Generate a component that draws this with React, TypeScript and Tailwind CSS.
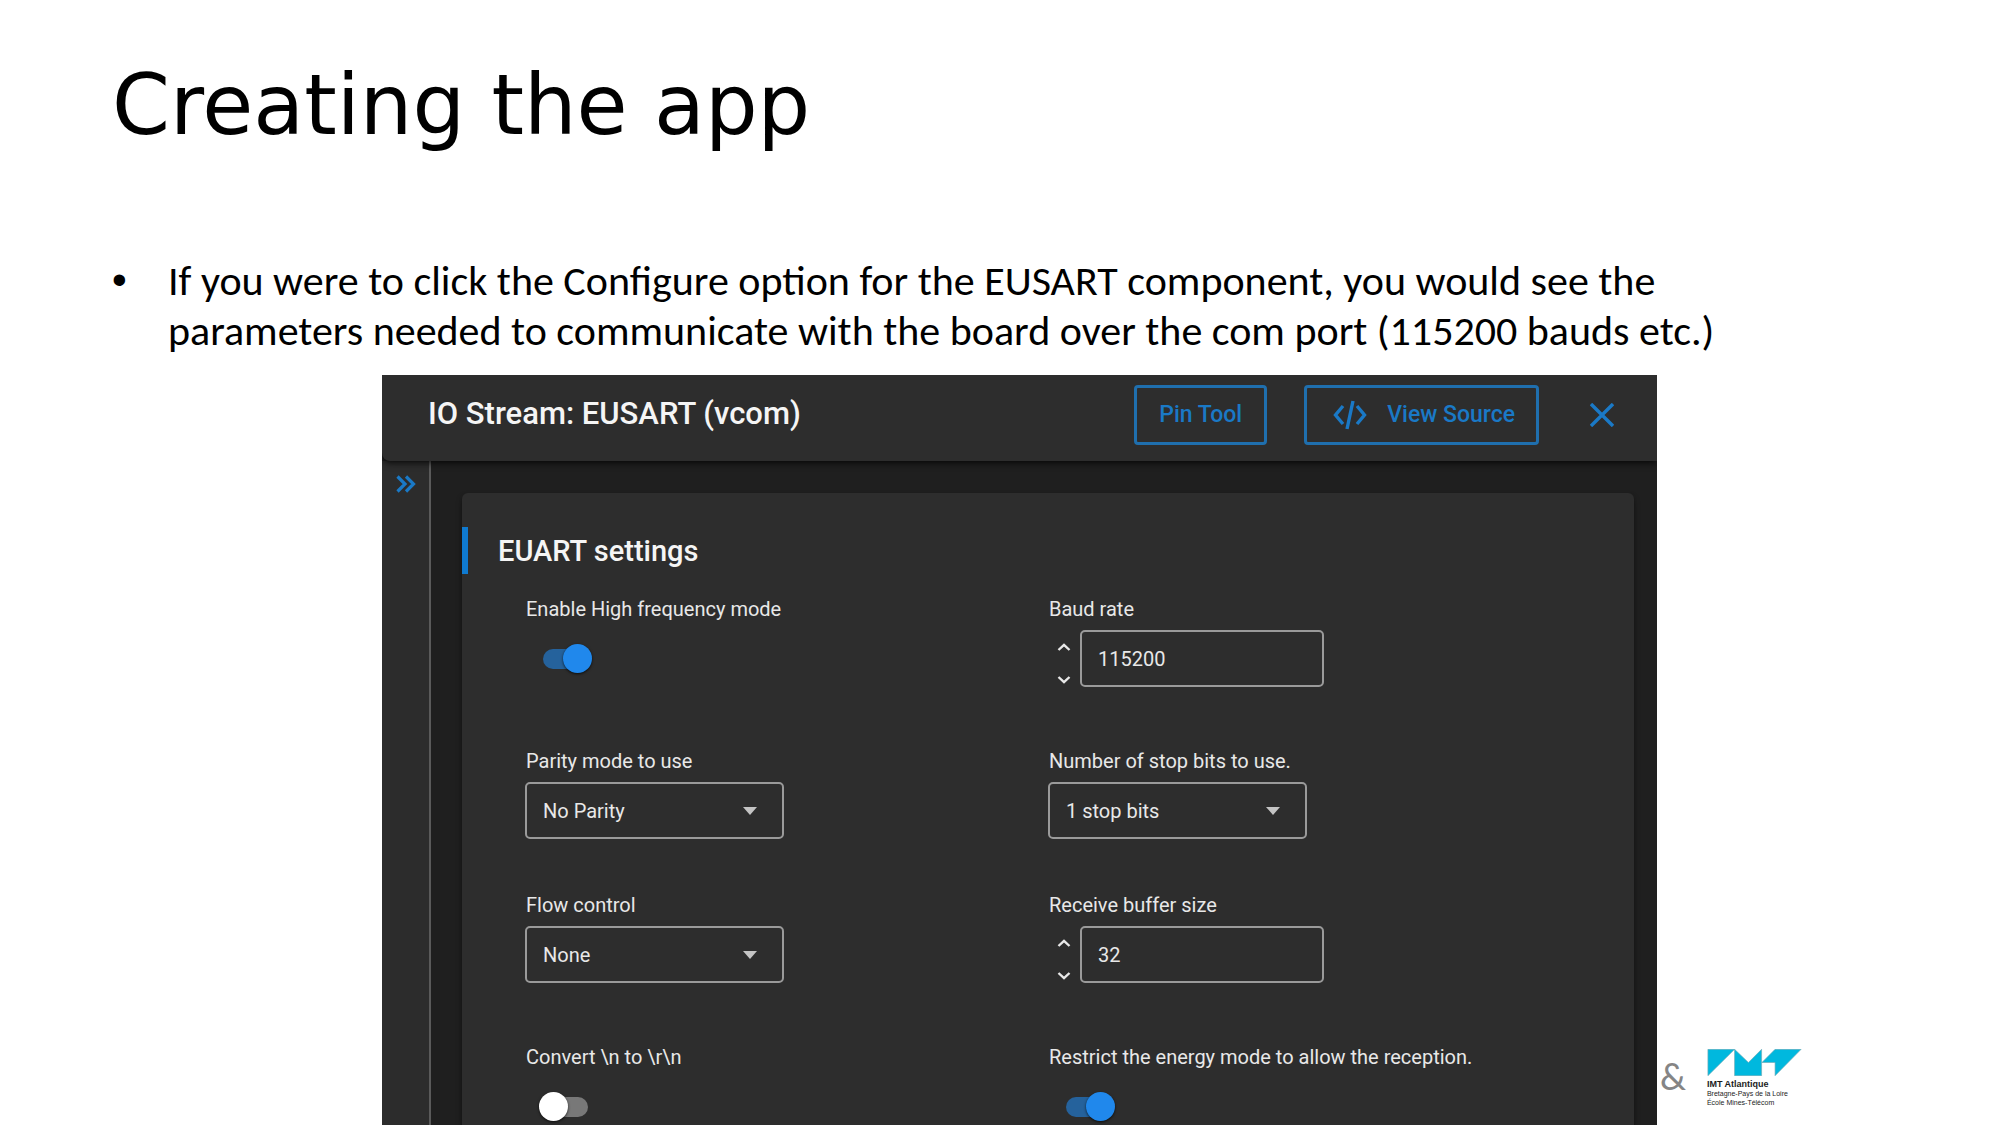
import { useId, useState, type ReactNode } from "react";

function CodeIcon() {
  return (
    <svg viewBox="0 0 34 30" className="h-[30px] w-[34px]" fill="none" stroke="currentColor" strokeWidth="3.400" aria-hidden="true">
      <path d="M10 6 L2.5 15 L10 24 M24 6 L31.500 15 L24 24 M20 1 L14 29" />
    </svg>
  );
}

function CloseIcon() {
  return (
    <svg viewBox="0 0 24 24" className="size-6" fill="none" stroke="currentColor" strokeWidth="3.400" aria-hidden="true">
      <path d="M1 1 L23 23 M23 1 L1 23" />
    </svg>
  );
}

function DoubleChevronIcon() {
  return (
    <svg viewBox="0 0 20 18" className="h-[18px] w-5" fill="none" stroke="currentColor" strokeWidth="3.200" aria-hidden="true">
      <path d="M1.500 1.500 L9 9 L1.500 16.500 M10 1.500 L17.500 9 L10 16.500" />
    </svg>
  );
}

function StepIcon({ up = false }: { up?: boolean }) {
  return (
    <svg viewBox="0 0 14 8" className="h-2 w-3.5" fill="none" stroke="currentColor" strokeWidth="2.400" aria-hidden="true">
      <path d={up ? "M1.500 7 L7 1.800 L12.500 7" : "M1.500 1 L7 6.200 L12.500 1"} />
    </svg>
  );
}

function Field({ label, id, children }: { label: string; id: string; children: ReactNode }) {
  return (
    <div>
      <label htmlFor={id} className="block pl-px text-[20px] leading-[30px] whitespace-nowrap">
        {label}
      </label>
      <div className="mt-1.5 flex h-[57px]">{children}</div>
    </div>
  );
}

function Toggle({ label, on }: { label: string; on: boolean }) {
  const id = useId();
  const [checked, setChecked] = useState(on);
  return (
    <Field label={label} id={id}>
      <span className="relative ml-[18px] flex items-center">
        <input
          id={id}
          type="checkbox"
          role="switch"
          checked={checked}
          onChange={(e) => setChecked(e.target.checked)}
          className="peer h-5 w-[45px] appearance-none rounded-full bg-[#787878] checked:bg-[#25629c]"
        />
        <span className="pointer-events-none absolute -left-1 size-[29px] rounded-full bg-white shadow-sm shadow-black/60 peer-checked:left-5 peer-checked:bg-[#2088ec]" />
      </span>
    </Field>
  );
}

function Choice({ label, options }: { label: string; options: string[] }) {
  const id = useId();
  return (
    <Field label={label} id={id}>
      <span className="relative flex w-[259px]">
        <select
          id={id}
          className="w-full appearance-none rounded-[5px] border-2 border-[#9a9a9a] bg-transparent pl-4 text-[20px]"
        >
          {options.map((o) => (
            <option key={o}>{o}</option>
          ))}
        </select>
        <svg viewBox="0 0 14 8" className="pointer-events-none absolute top-[25px] right-[27px] h-2 w-3.5" fill="#c4c4c4" aria-hidden="true">
          <path d="M0 0 H14 L7 8 Z" />
        </svg>
      </span>
    </Field>
  );
}

function NumberField({ label, initial }: { label: string; initial: number }) {
  const id = useId();
  const [value, setValue] = useState(initial);
  return (
    <Field label={label} id={id}>
      <span className="flex h-[66px] w-8 flex-col">
        <button type="button" aria-label={`Increase ${label}`} onClick={() => setValue(value + 1)} className="flex flex-1 items-center justify-center">
          <StepIcon up />
        </button>
        <button type="button" aria-label={`Decrease ${label}`} onClick={() => setValue(value - 1)} className="flex flex-1 items-center justify-center">
          <StepIcon />
        </button>
      </span>
      <input
        id={id}
        inputMode="numeric"
        value={value}
        onChange={(e) => setValue(Number(e.target.value) || 0)}
        className="w-[244px] rounded-[5px] border-2 border-[#9a9a9a] bg-transparent pl-4 text-[20px]"
      />
    </Field>
  );
}

function Dialog() {
  const outlined =
    "flex h-[60px] shrink-0 items-center rounded-[4px] border-3 border-[#1f6fae] text-[23px] font-medium whitespace-nowrap";
  return (
    <section className="flex w-[63.75vw] shrink-0 flex-col overflow-hidden bg-[#1f1f1f] font-[Roboto,sans-serif] text-[#e8e8e8]">
      <header className="relative flex h-[86px] shrink-0 items-start rounded-bl-lg bg-[#2d2d2d] pt-2.5 pr-[43px] pl-[46px] text-[#1a79c6] shadow-md shadow-black/50">
        <h2 className="mr-auto text-[31px] leading-[58px] font-medium text-[#f5f5f5]">IO Stream: EUSART (vcom)</h2>
        <button type="button" className={`${outlined} px-[22px]`}>Pin Tool</button>
        <button type="button" className={`${outlined} ml-[37px] gap-5 pr-[21px] pl-[26px]`}>
          <CodeIcon />
          View Source
        </button>
        <button type="button" aria-label="Close" className="ml-[51px] flex h-[60px] items-center">
          <CloseIcon />
        </button>
      </header>
      <div className="flex min-h-0 flex-1">
        <aside className="flex w-[49px] shrink-0 items-start justify-center border-r-2 border-[#5a5a5a] bg-[#2c2c2c] pt-3.5 text-[#1a79c6]">
          <button type="button" aria-label="Expand sidebar">
            <DoubleChevronIcon />
          </button>
        </aside>
        <div className="min-w-0 flex-1 pt-8 pr-[23px] pl-[31px]">
          <div className="h-full rounded-t-md bg-[#2d2d2d] pt-[34px] shadow-md shadow-black/50">
            <h3 className="border-l-6 border-[#0f7ad0] pt-px pl-[30px] text-[29px] leading-[46px] font-medium text-[#f5f5f5]">
              EUART settings
            </h3>
            <div className="mt-5 grid grid-cols-[523px_1fr] grid-rows-[101px_93px_101px_93px] gap-y-[51px] pl-[63px]">
              <Toggle label="Enable High frequency mode" on />
              <NumberField label="Baud rate" initial={115200} />
              <Choice label="Parity mode to use" options={["No Parity", "Even Parity", "Odd Parity"]} />
              <Choice label="Number of stop bits to use." options={["1 stop bits", "2 stop bits"]} />
              <Choice label="Flow control" options={["None", "CTS", "RTS"]} />
              <NumberField label="Receive buffer size" initial={32} />
              <Toggle label={"Convert \\n to \\r\\n"} on={false} />
              <Toggle label="Restrict the energy mode to allow the reception." on />
            </div>
          </div>
        </div>
      </div>
    </section>
  );
}

function Logo() {
  return (
    <div className="font-['Liberation_Sans',sans-serif] whitespace-nowrap text-[#1c1c1c]">
      <svg viewBox="0 0 285 82" className="h-[27px] w-[95px]" fill="#00b8de" stroke="#6fa9b5" strokeWidth="2" aria-hidden="true">
        <path d="M1 1 H82 L1 81 Z" />
        <path d="M82 1 L124 41 L164 1 V81 H82 Z" />
        <path d="M165 41 L205 1 H284 L205 81 V41 Z" />
      </svg>
      <p className="mt-[3px] text-[9px] leading-[10px] font-bold">IMT Atlantique</p>
      <p className="text-[7px] leading-[9px]">Bretagne-Pays de la Loire</p>
      <p className="text-[7px] leading-[9px]">École Mines-Télécom</p>
    </div>
  );
}

export default function App() {
  return (
    <main className="flex h-screen flex-col overflow-hidden bg-white text-black">
      <h1 className="mt-[57px] ml-28 font-['DejaVu_Sans',sans-serif] text-[83px] leading-[98px]">Creating the app</h1>
      <ul className="mt-[101px] pr-[200px] pl-28 font-[Carlito,Lato,sans-serif] text-[42px] leading-[50px]">
        <li className="flex">
          <span className="w-14 shrink-0 font-['Liberation_Sans',sans-serif] leading-[48px]" aria-hidden="true">•</span>
          <p>
            If you were to click the Configure option for the EUSART component, you would see the parameters needed to
            communicate with the board over the com port (115200 bauds etc.)
          </p>
        </li>
      </ul>
      <div className="mt-[19px] flex min-h-0 flex-1 pl-[19.1%]">
        <Dialog />
        <footer className="flex items-end gap-[21px] self-end pb-[18px] pl-[3px]">
          <span className="pb-2 font-[Carlito,Lato,sans-serif] text-[38px] leading-[44px] text-[#858585]">&amp;</span>
          <Logo />
        </footer>
      </div>
    </main>
  );
}
